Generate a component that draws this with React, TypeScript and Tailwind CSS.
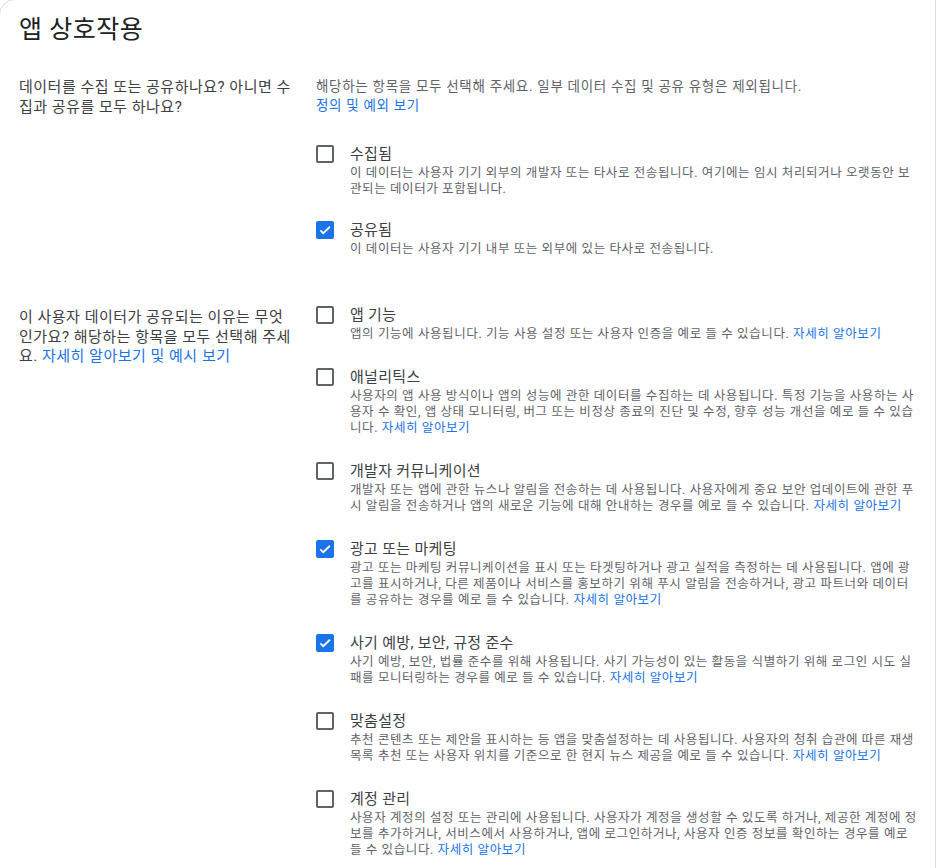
import React from "react";

const FONT = { fontFamily: 'Roboto, "Noto Sans CJK KR", "Noto Sans", sans-serif' };

function Check({ checked }: { checked: boolean }) {
  if (checked) {
    return (
      <div className="w-[18px] h-[18px] rounded-[2px] bg-[#1a73e8] flex items-center justify-center shrink-0 mt-px">
        <svg width="14" height="14" viewBox="0 0 24 24">
          <path d="M4 12.5l5 5L20.5 6.5" fill="none" stroke="#fff" strokeWidth="3.2" />
        </svg>
      </div>
    );
  }
  return <div className="w-[18px] h-[18px] rounded-[2px] border-2 border-[#5f6368] shrink-0 mt-px" />;
}

function Link({ children }: { children: React.ReactNode }) {
  return <span className="text-[#1a73e8]">{children}</span>;
}

function Item({ checked, label, desc, link }: { checked: boolean; label: string; desc: string; link?: boolean }) {
  return (
    <div className="flex gap-4">
      <Check checked={checked} />
      <div className="flex-1 min-w-0">
        <div className="text-[15px] leading-[20px] tracking-[0.3px] text-[#3c4043]">{label}</div>
        <div className="mt-px text-[12.5px] leading-[16px] tracking-[0.6px] text-[#5f6368]">
          {desc}
          {link && (
            <>
              {" "}
              <Link>자세히 알아보기</Link>
            </>
          )}
        </div>
      </div>
    </div>
  );
}

export default function App() {
  return (
    <div className="bg-white min-h-[868px] overflow-hidden" style={FONT}>
      <div className="-ml-px -mt-px border border-[#dadce0] rounded-tl-[16px] min-h-[880px] pl-[19px] pr-[16px] pt-[14px]">
        <h1 className="text-[25px] leading-[32px] tracking-[0.5px] text-[#202124] font-normal">앱 상호작용</h1>

        <div className="flex mt-[31px]">
          <div className="w-[272px] shrink-0 text-[15px] leading-[20px] tracking-[0.5px] text-[#3c4043]">
            데이터를 수집 또는 공유하나요? 아니면 수집과 공유를 모두 하나요?
          </div>
          <div className="ml-[25px] flex-1">
            <div className="text-[13.5px] leading-[19px] tracking-[0.7px] text-[#5f6368]">
              해당하는 항목을 모두 선택해 주세요. 일부 데이터 수집 및 공유 유형은 제외됩니다.
            </div>
            <div className="text-[13.5px] leading-[19px] tracking-[0.7px]">
              <Link>정의 및 예외 보기</Link>
            </div>
            <div className="flex flex-col gap-[23px] mt-[29px]">
              <Item
                checked={false}
                label="수집됨"
                desc="이 데이터는 사용자 기기 외부의 개발자 또는 타사로 전송됩니다. 여기에는 임시 처리되거나 오랫동안 보관되는 데이터가 포함됩니다."
              />
              <Item checked={true} label="공유됨" desc="이 데이터는 사용자 기기 내부 또는 외부에 있는 타사로 전송됩니다." />
            </div>
          </div>
        </div>

        <div className="flex mt-[48px]">
          <div className="w-[272px] shrink-0 text-[15px] leading-[19.5px] tracking-[0.5px] text-[#3c4043] pt-[3px]">
            이 사용자 데이터가 공유되는 이유는 무엇인가요? 해당하는 항목을 모두 선택해 주세요.{" "}
            <Link>자세히 알아보기 및 예시 보기</Link>
          </div>
          <div className="ml-[25px] flex-1 flex flex-col gap-[25px]">
            <Item
              checked={false}
              label="앱 기능"
              desc="앱의 기능에 사용됩니다. 기능 사용 설정 또는 사용자 인증을 예로 들 수 있습니다."
              link
            />
            <Item
              checked={false}
              label="애널리틱스"
              desc="사용자의 앱 사용 방식이나 앱의 성능에 관한 데이터를 수집하는 데 사용됩니다. 특정 기능을 사용하는 사용자 수 확인, 앱 상태 모니터링, 버그 또는 비정상 종료의 진단 및 수정, 향후 성능 개선을 예로 들 수 있습니다."
              link
            />
            <Item
              checked={false}
              label="개발자 커뮤니케이션"
              desc="개발자 또는 앱에 관한 뉴스나 알림을 전송하는 데 사용됩니다. 사용자에게 중요 보안 업데이트에 관한 푸시 알림을 전송하거나 앱의 새로운 기능에 대해 안내하는 경우를 예로 들 수 있습니다."
              link
            />
            <Item
              checked={true}
              label="광고 또는 마케팅"
              desc="광고 또는 마케팅 커뮤니케이션을 표시 또는 타겟팅하거나 광고 실적을 측정하는 데 사용됩니다. 앱에 광고를 표시하거나, 다른 제품이나 서비스를 홍보하기 위해 푸시 알림을 전송하거나, 광고 파트너와 데이터를 공유하는 경우를 예로 들 수 있습니다."
              link
            />
            <Item
              checked={true}
              label="사기 예방, 보안, 규정 준수"
              desc="사기 예방, 보안, 법률 준수를 위해 사용됩니다. 사기 가능성이 있는 활동을 식별하기 위해 로그인 시도 실패를 모니터링하는 경우를 예로 들 수 있습니다."
              link
            />
            <Item
              checked={false}
              label="맞춤설정"
              desc="추천 콘텐츠 또는 제안을 표시하는 등 앱을 맞춤설정하는 데 사용됩니다. 사용자의 청취 습관에 따른 재생목록 추천 또는 사용자 위치를 기준으로 한 현지 뉴스 제공을 예로 들 수 있습니다."
              link
            />
            <Item
              checked={false}
              label="계정 관리"
              desc="사용자 계정의 설정 또는 관리에 사용됩니다. 사용자가 계정을 생성할 수 있도록 하거나, 제공한 계정에 정보를 추가하거나, 서비스에서 사용하거나, 앱에 로그인하거나, 사용자 인증 정보를 확인하는 경우를 예로 들 수 있습니다."
              link
            />
          </div>
        </div>
      </div>
    </div>
  );
}
